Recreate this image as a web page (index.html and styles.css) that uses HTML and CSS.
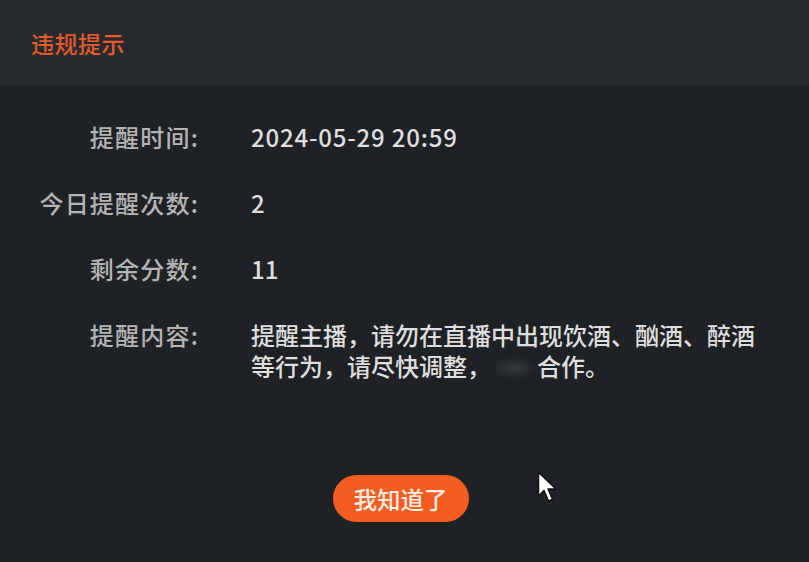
FILE: index.html
```html
<!DOCTYPE html>
<html lang="zh-CN">
<head>
    <meta charset="UTF-8">
    <meta name="viewport" content="width=device-width, initial-scale=1.0">
    <title>违规提示</title>
    <link rel="stylesheet" href="styles.css">
</head>
<body>
<div class="dialog">
    <div class="dialog-header">
        <h1>违规提示</h1>
    </div>
    <div class="dialog-body">
        <div class="info">
            <div class="label">提醒时间:</div>
            <div class="value date">2024-05-29 20:59</div>
            <div class="label">今日提醒次数:</div>
            <div class="value">2</div>
            <div class="label">剩余分数:</div>
            <div class="value">11</div>
            <div class="label">提醒内容:</div>
            <div class="value content">提醒主播，请勿在直播中出现饮酒、酗酒、醉酒等行为，请尽快调整，<span class="blur"></span>合作。</div>
        </div>
        <div class="actions">
            <button class="ok-btn">我知道了</button>
        </div>
    </div>
    <!-- 鼠标指针 -->
    <svg class="cursor" width="22" height="34" viewBox="0 0 22 34">
        <path d="M1.5 1.5 L1.5 25 L7 19.5 L11.5 30 L15.5 28.3 L11 18 L19 18 Z" fill="#fff" stroke="#111" stroke-width="1.5" stroke-linejoin="round"/>
    </svg>
</div>
</body>
</html>
```

FILE: styles.css
```css
/* 全局样式 */
body {
    margin: 0;
    padding: 0;
    background: #1f2225;
    font-family: "Noto Sans CJK SC", "Noto Sans", sans-serif;
}

.dialog {
    position: relative;
    width: 809px;
    height: 562px;
    background: #1f2225;
    overflow: hidden;
}

.dialog-header {
    height: 85px;
    background: #272a2d;
    display: flex;
    align-items: center;
    padding-left: 31px;
}

.dialog-header h1 {
    margin: 0;
    font-size: 23px;
    font-weight: 500;
    color: #e55a2b;
    letter-spacing: 0.5px;
}

.dialog-body {
    padding-top: 36px;
}

.info {
    display: grid;
    grid-template-columns: 199px 1fr;
    column-gap: 52px;
    row-gap: 35px;
    font-size: 24px;
    line-height: 31px;
    font-weight: 500;
    padding-right: 50px;
}

.label {
    text-align: right;
    color: #b4b4b4;
    letter-spacing: 1.2px;
}

.value {
    color: #dedede;
}

.date {
    letter-spacing: 0.8px;
}

.content {
    max-width: 510px;
}

/* 打码部分 */
.blur {
    display: inline-block;
    width: 46px;
    height: 20px;
    vertical-align: -2px;
    background: radial-gradient(ellipse at center, rgba(255, 255, 255, 0.14), rgba(255, 255, 255, 0) 70%);
    filter: blur(3px);
}

.actions {
    display: flex;
    justify-content: center;
    padding-right: 8px;
    margin-top: 94px;
}

.ok-btn {
    width: 136px;
    height: 47px;
    border: none;
    border-radius: 24px;
    background: #f45d1f;
    color: #f7ece3;
    font-family: inherit;
    font-size: 23.5px;
    font-weight: 500;
    cursor: pointer;
}

.cursor {
    position: absolute;
    left: 537px;
    top: 471px;
}
```
